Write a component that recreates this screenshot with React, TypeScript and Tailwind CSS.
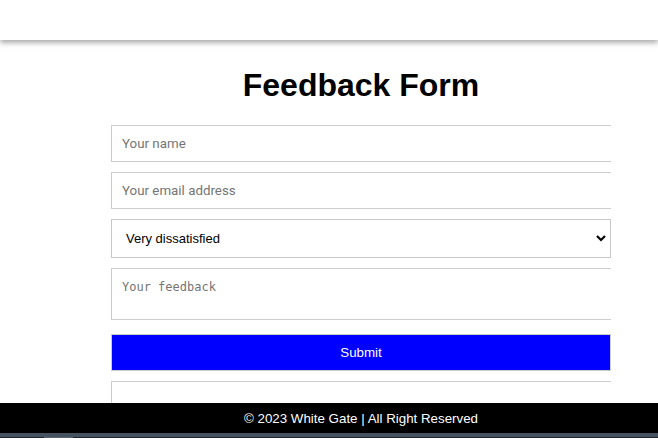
export default function App() {
  return (
    <div className="flex h-screen flex-col overflow-hidden bg-white font-['Liberation_Sans',Arial,sans-serif]">
      <header className="relative z-10 h-10 shrink-0 bg-white shadow-[0_3px_5px_rgba(0,0,0,0.32)]" />

      <main className="flex flex-1 justify-center overflow-hidden pl-16 pt-[27px]">
        <div className="w-[500px] overflow-hidden">
          <h1 className="text-center text-[32px] font-bold leading-[37px] text-black">Feedback Form</h1>

          <form className="mt-[21px] flex flex-col">
            <input
              type="text"
              placeholder="Your name"
              className="h-[37px] w-[530px] border border-[#cccccc] px-[10px] font-['Roboto',sans-serif] text-[13.33px] text-black outline-none placeholder:text-[#757575]"
            />
            <input
              type="email"
              placeholder="Your email address"
              className="mt-[10px] h-[37px] w-[530px] border border-[#cccccc] px-[10px] font-['Roboto',sans-serif] text-[13.33px] text-black outline-none placeholder:text-[#757575]"
            />
            <div className="relative mt-[10px]">
              <select
                defaultValue="1"
                className="h-[39px] w-full appearance-none border border-[#c8c8c8] bg-white pl-[14px] pr-8 font-['Liberation_Sans',Arial,sans-serif] text-[13px] text-black outline-none"
              >
                <option value="1">Very dissatisfied</option>
                <option value="2">Dissatisfied</option>
                <option value="3">Neutral</option>
                <option value="4">Satisfied</option>
                <option value="5">Very satisfied</option>
              </select>
              <svg
                className="pointer-events-none absolute right-[5px] top-[15px] h-[8px] w-[10px]"
                viewBox="0 0 10 8"
                fill="none"
                stroke="#000"
                strokeWidth="2.2"
              >
                <path d="M1 2l4 4 4-4" />
              </svg>
            </div>
            <textarea
              placeholder="Your feedback"
              className="mt-[10px] block h-[52px] w-[530px] resize-none border border-[#cccccc] px-[10px] pt-[11px] font-['DejaVu_Sans_Mono',monospace] text-[12px] leading-[15px] text-black outline-none placeholder:text-[#757575]"
            />
            <button
              type="button"
              className="mt-[14px] h-[37px] w-full border border-[#cccccc] bg-[#0000ff] text-[13.33px] text-white"
            >
              Submit
            </button>
            <input
              type="text"
              className="mt-[10px] h-[37px] w-[530px] shrink-0 border border-[#cccccc] px-[10px] outline-none"
            />
          </form>
        </div>
      </main>

      <footer className="h-[30px] shrink-0 bg-black pl-16 pt-px text-center text-[13.33px] leading-[30px] text-white">
        © 2023 White Gate | All Right Reserved
      </footer>
      <div className="flex h-[5px] shrink-0 flex-col">
        <div className="h-[4px] bg-[#46525f]" />
        <div className="flex h-px bg-[#1f262d]">
          <div className="ml-[44px] w-[29px] bg-[#5a6470]" />
        </div>
      </div>
    </div>
  )
}
